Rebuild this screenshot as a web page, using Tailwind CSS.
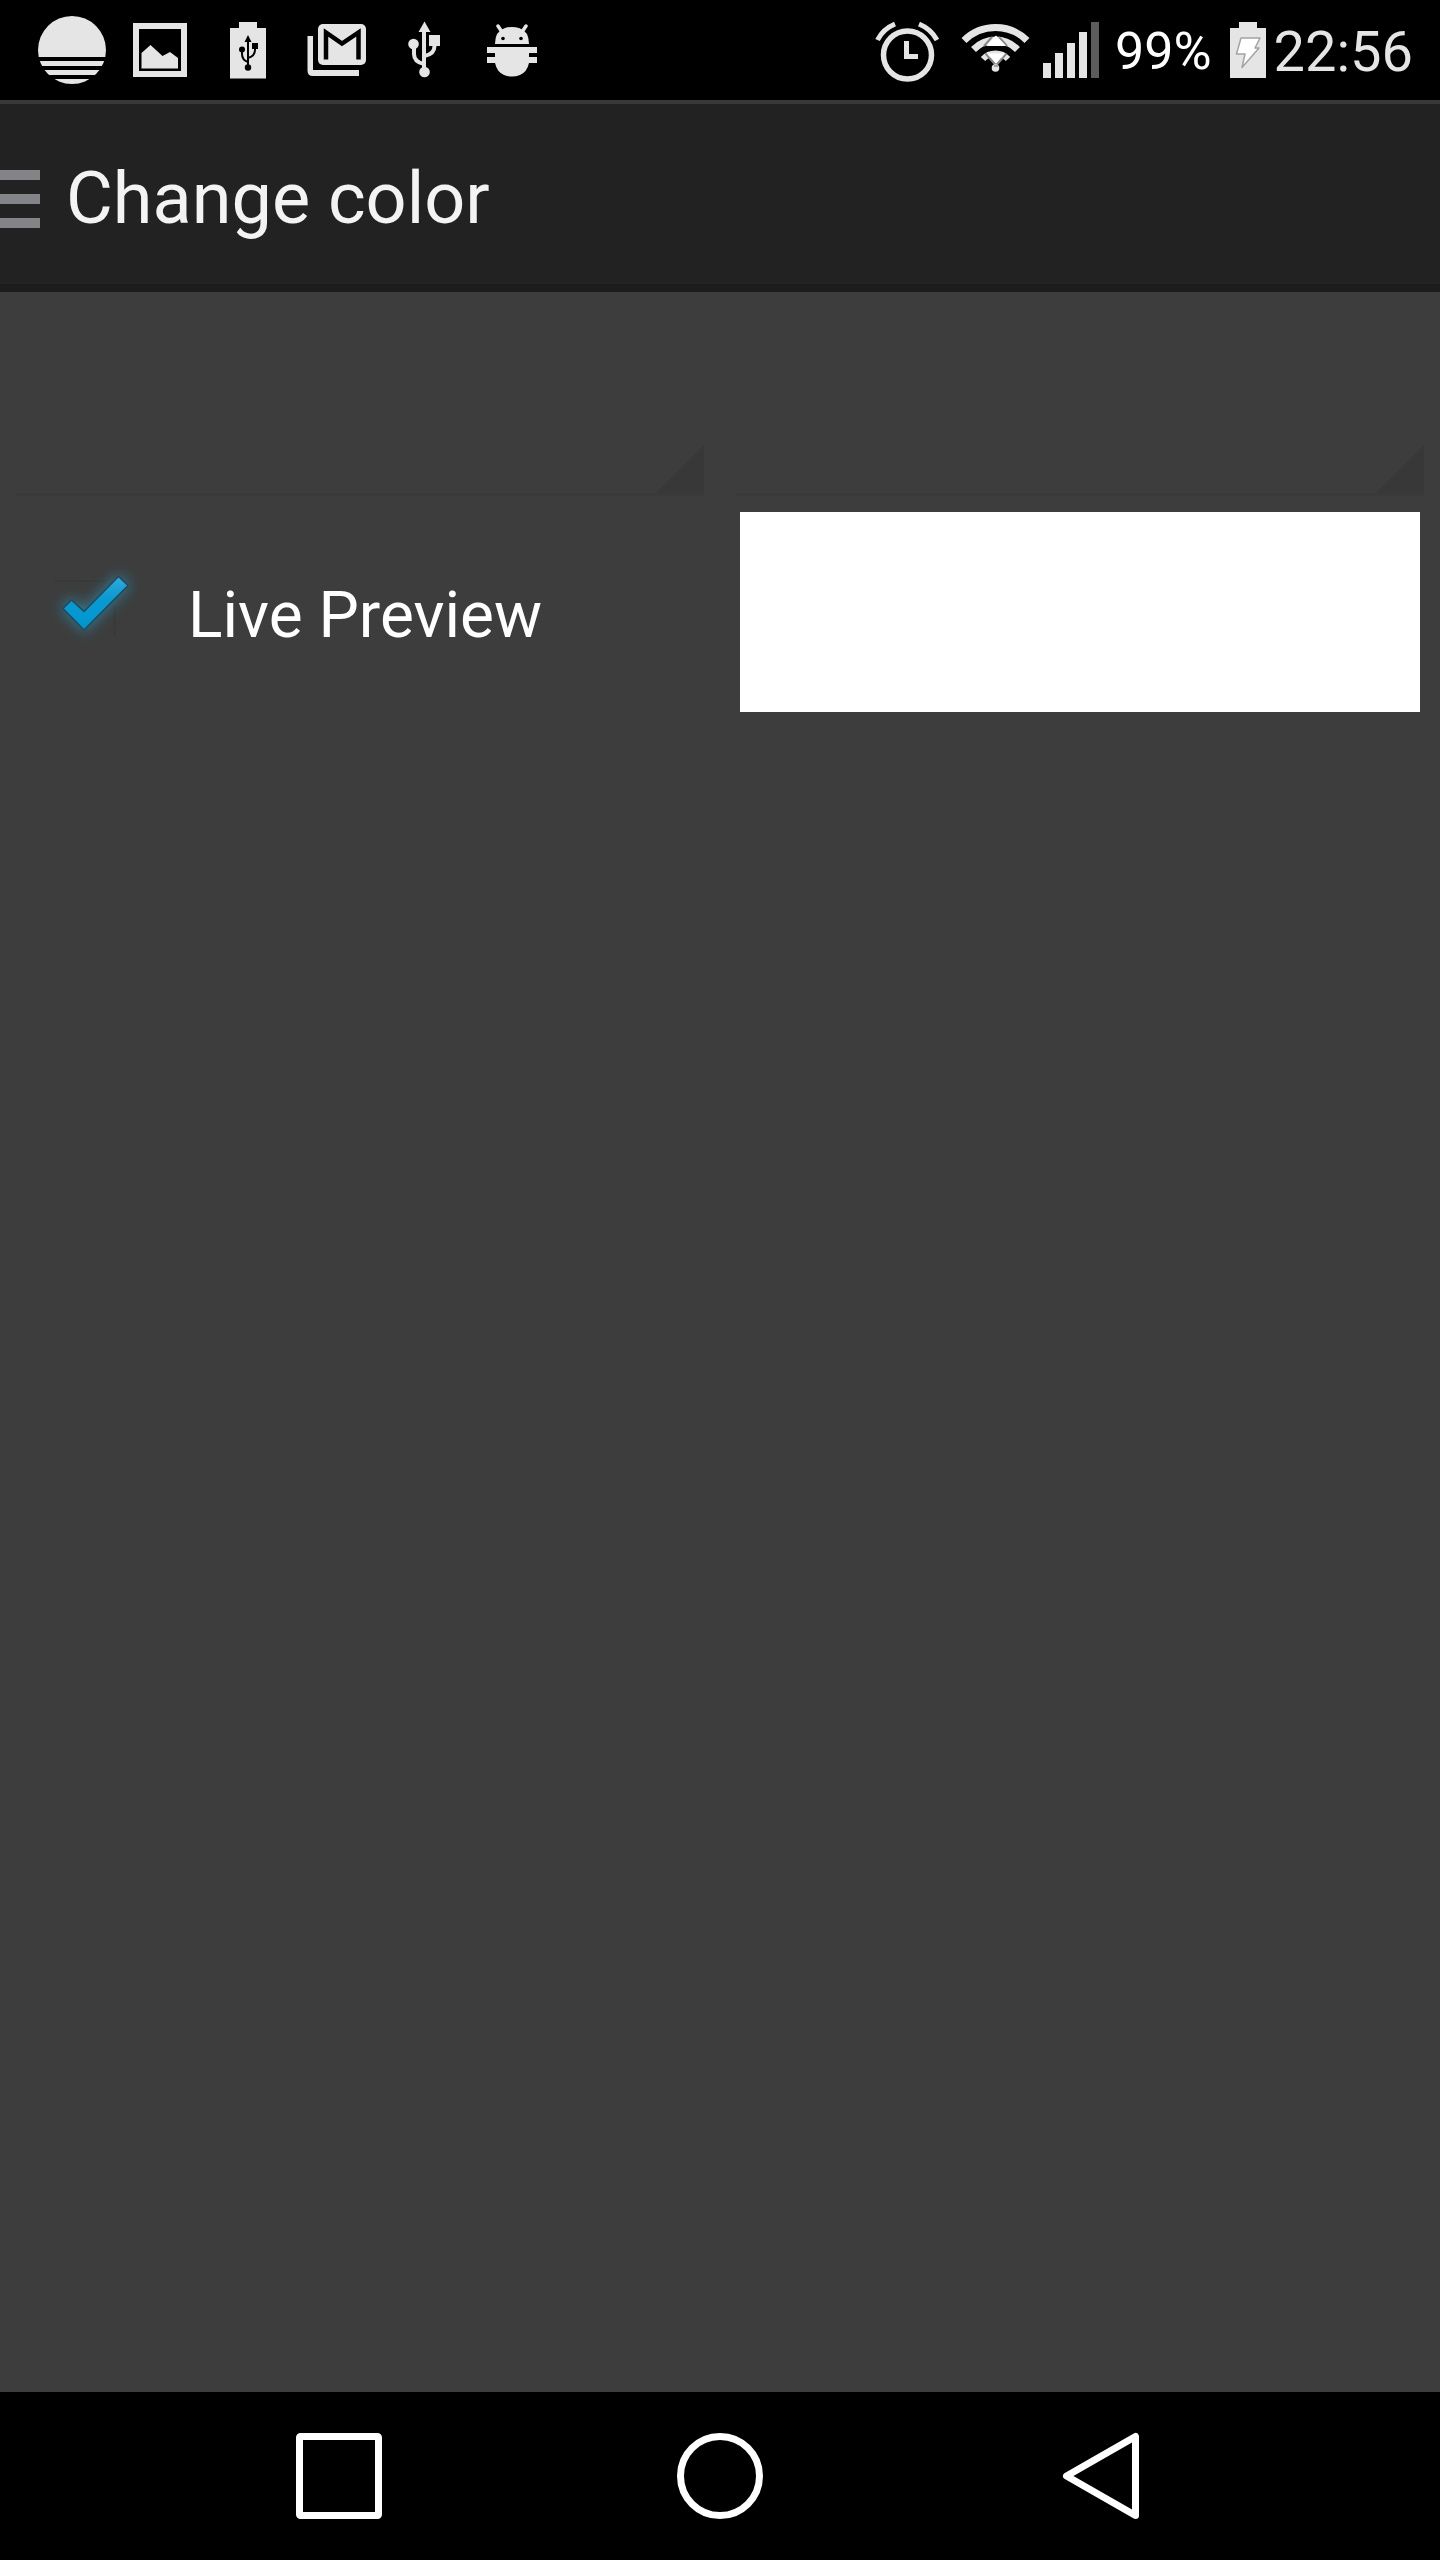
<!DOCTYPE html>
<html lang="en">
<head>
<meta charset="utf-8">
<meta name="viewport" content="width=device-width, initial-scale=1">
<title>Change color</title>
<script src="https://cdn.jsdelivr.net/npm/@tailwindcss/browser@4"></script>
</head>
<body class="flex min-h-screen flex-col bg-[#3d3d3d] font-['Roboto',sans-serif] text-white">

<!-- Status bar -->
<div class="flex h-[100px] items-center justify-between bg-black pr-[27px] pl-7 text-[#e5e5e5]">
  <div class="flex" aria-hidden="true">
    <svg class="h-[100px] w-[88px]" viewBox="28 0 88 100" fill="currentColor">
      <circle cx="72" cy="50" r="34"/>
      <path fill="#000" d="M36 57h72v4H36zM36 66h72v4H36zM36 75h72v4H36z"/>
    </svg>
    <svg class="h-[100px] w-[88px]" viewBox="116 0 88 100" fill="currentColor">
      <path fill-rule="evenodd" d="M133 23h54v54h-54zM139 29v42h42V29z"/>
      <path d="M141.500 68.500V53L150.500 45 162.500 56 170 52 178 58v10.500z"/>
    </svg>
    <svg class="h-[100px] w-[88px]" viewBox="204 0 88 100">
      <path fill="currentColor" d="M239 22h18v6h9v50.500h-36V28h9z"/>
      <g fill="none" stroke="#000" stroke-width="2"><path d="M248 40v28M242 50v4q0 6 6 8M255 47v3q0 6-7 8"/></g>
      <path d="M248 35l3.500 7h-7zM252 43h6v6h-6z"/><circle cx="242" cy="49.500" r="3"/><circle cx="248" cy="67.500" r="3.200"/>
    </svg>
    <svg class="h-[100px] w-[88px]" viewBox="292 0 88 100">
      <rect x="318" y="24" width="48" height="41" rx="5" fill="currentColor"/>
      <path fill="none" stroke="#000" stroke-width="4.500" d="M326 59.500V32.500L342 43.500 358.500 32.500V59.500"/>
      <path fill="currentColor" d="M307.500 36h5.500v34h46v6h-46q-5.500 0-5.500-5.500z"/>
    </svg>
    <svg class="h-[100px] w-[88px]" viewBox="380 0 88 100" fill="currentColor">
      <path d="M424.500 21.500l6 10.500h-12zM429 35h11v11h-11z"/><circle cx="413.500" cy="44" r="5.300"/><circle cx="424.500" cy="72" r="5.300"/>
      <path fill="none" stroke="currentColor" stroke-width="4" d="M424 30v40M414 46v8q0 8 10 10M434.500 44v2q0 8-10 10"/>
    </svg>
    <svg class="h-[100px] w-[88px]" viewBox="468 0 88 100" fill="currentColor">
      <path d="M495 44q0-13 10-16 7-2 14 0 10 3 10 16zM487 47h50v6h-8v4h8v6h-8q-2 9-9 12-8 3-16 0-7-3-9-12h-8v-6h8v-4h-8z"/>
      <path fill="none" stroke="currentColor" stroke-width="3.500" stroke-linecap="round" d="M498 26l4 6M526 26l-4 6"/>
      <circle cx="503" cy="38.500" r="1.800" fill="#000"/><circle cx="521" cy="38.500" r="1.800" fill="#000"/>
    </svg>
  </div>
  <div class="flex items-center">
    <svg class="h-[100px] w-[88px]" viewBox="869 0 88 100" fill="none" stroke="currentColor" aria-hidden="true">
      <circle cx="907.500" cy="55" r="24" stroke-width="5.500"/>
      <path stroke-width="5" d="M906.500 41v15.500h11.500M877.500 40Q883 29 895 24M937 40Q931 29 919 24"/>
    </svg>
    <svg class="h-[100px] w-[78px]" viewBox="957 0 78 100" aria-hidden="true">
      <g fill="none" stroke="currentColor">
        <path stroke-width="7" d="M964 40.500Q977 27.500 995.500 27.500T1027 40.500M973.500 49.500Q983 40 995.500 40T1017.500 49.500"/>
        <path stroke-width="6" d="M983 59Q988 53.500 995.500 53.500T1008 59"/>
      </g>
      <path fill="none" stroke="#8a8a8a" stroke-width="2" d="M984 46l8-9M1007 46l-8-9M985.500 53.500l10.500 12 10.500-12"/>
      <path fill="#fff" d="M996 35.500l10 10.500h-20zM987 53.500h18l-9 10.500z"/>
      <circle cx="995.500" cy="68" r="3.800" fill="currentColor"/>
      <path stroke="#8a8a8a" stroke-width="1.500" d="M994 66h4"/>
    </svg>
    <svg class="h-[100px] w-[80px]" viewBox="1035 0 80 100" fill="currentColor" aria-hidden="true">
      <path d="M1043 63h8v15h-8zM1055 53h8v25h-8zM1067 43h8v35h-8zM1079 32h8v46h-8z"/>
      <path fill="#5c5c5c" d="M1091 22h8v56h-8z"/>
    </svg>
    <span class="pt-1 text-[52px] leading-[60px] text-white">99%</span>
    <svg class="h-[100px] w-[62px]" viewBox="1211 0 62 100" aria-hidden="true">
      <path fill="currentColor" d="M1238 22h18v6h9v50h-36V28h9z"/>
      <path fill="#fff" stroke="#a3a3a3" stroke-width="1.500" stroke-linejoin="round" d="M1240 38h19l-5 10h4l-17 19.500 3-13.500h-8.500z"/>
    </svg>
    <span class="pt-1 text-[56px] leading-[64px]">22:56</span>
  </div>
</div>

<!-- Action bar -->
<header class="flex h-48 items-center border-t-4 border-b-8 border-t-[#383838] border-b-[#1c1c1c] bg-[#222222] pt-2.5">
  <button type="button" aria-label="Open menu" class="w-[66px] shrink-0">
    <svg class="h-[58px] w-10" viewBox="0 0 40 58" fill="#838487" aria-hidden="true"><path d="M0 0h40v10H0zM0 24h40v10H0zM0 48h40v10H0z"/></svg>
  </button>
  <h1 class="text-[72px] leading-[84px] text-[#f3f3f3]">Change color</h1>
</header>

<!-- Colour settings -->
<main class="grid flex-1 grid-cols-2 content-start">
  <div class="px-4 pt-[153px] pb-4">
    <div class="relative border-b-3 border-[#3a3a3a]">
      <select aria-label="First color option" class="block h-12 w-full appearance-none bg-transparent text-5xl outline-none"></select>
      <svg class="pointer-events-none absolute right-0 bottom-0 size-12" viewBox="0 0 48 48" aria-hidden="true"><path fill="#383838" d="M48 0v48H0z"/></svg>
    </div>
  </div>
  <div class="px-4 pt-[153px] pb-4">
    <div class="relative border-b-3 border-[#3a3a3a]">
      <select aria-label="Second color option" class="block h-12 w-full appearance-none bg-transparent text-5xl outline-none"></select>
      <svg class="pointer-events-none absolute right-0 bottom-0 size-12" viewBox="0 0 48 48" aria-hidden="true"><path fill="#383838" d="M48 0v48H0z"/></svg>
    </div>
  </div>
  <label class="flex items-center gap-7 pl-[30px] text-[64px] leading-[76px]">
    <span class="grid">
      <input type="checkbox" checked class="peer col-start-1 row-start-1 h-[110px] w-[130px] appearance-none">
      <svg class="pointer-events-none invisible col-start-1 row-start-1 h-[110px] w-[130px] overflow-visible peer-checked:visible" viewBox="30 557 130 110" aria-hidden="true">
        <defs>
          <filter id="glow" x="-50%" y="-50%" width="200%" height="200%"><feGaussianBlur stdDeviation="7"/></filter>
          <linearGradient id="tick" x1="0" y1="0" x2="0" y2="1"><stop offset="0" stop-color="#35a9dc"/><stop offset=".4" stop-color="#0a9ad2"/><stop offset="1" stop-color="#0095cf"/></linearGradient>
        </defs>
        <path fill="none" stroke="#393939" stroke-width="2" d="M54 581h52M114.500 607v29"/>
        <path fill="#2a9cc4" stroke="#2a9cc4" stroke-width="4" opacity=".6" filter="url(#glow)" d="M63 608.500L71.500 600 84 611.500 118.500 576.500 128 585.500 84 630z"/>
        <path fill="url(#tick)" stroke="#1d4a5c" stroke-width="1.500" stroke-linejoin="round" d="M63 608.500L71.500 600 84 611.500 118.500 576.500 128 585.500 84 630z"/>
      </svg>
    </span>
    <span class="pt-2">Live Preview</span>
  </label>
  <div class="px-5">
    <div class="h-[200px] bg-white" role="img" aria-label="Selected color"></div>
  </div>
</main>

<!-- Navigation bar -->
<nav class="grid h-[168px] grid-cols-3 bg-black px-[148px]">
  <button type="button" aria-label="Recent apps" class="grid place-items-center">
    <svg class="size-[88px]" viewBox="0 0 88 88" fill="none" stroke="#fff" stroke-width="7" aria-hidden="true"><rect x="4.500" y="4.500" width="79" height="79" rx="1"/></svg>
  </button>
  <button type="button" aria-label="Home" class="grid place-items-center">
    <svg class="size-[88px]" viewBox="0 0 88 88" fill="none" stroke="#fff" stroke-width="7" aria-hidden="true"><circle cx="44" cy="44" r="39.500"/></svg>
  </button>
  <button type="button" aria-label="Back" class="grid place-items-center">
    <svg class="size-[88px]" viewBox="0 0 88 88" fill="none" stroke="#fff" stroke-width="7" stroke-linejoin="round" aria-hidden="true"><path d="M9.500 44L78.500 4.500v79z"/></svg>
  </button>
</nav>
</body>
</html>
